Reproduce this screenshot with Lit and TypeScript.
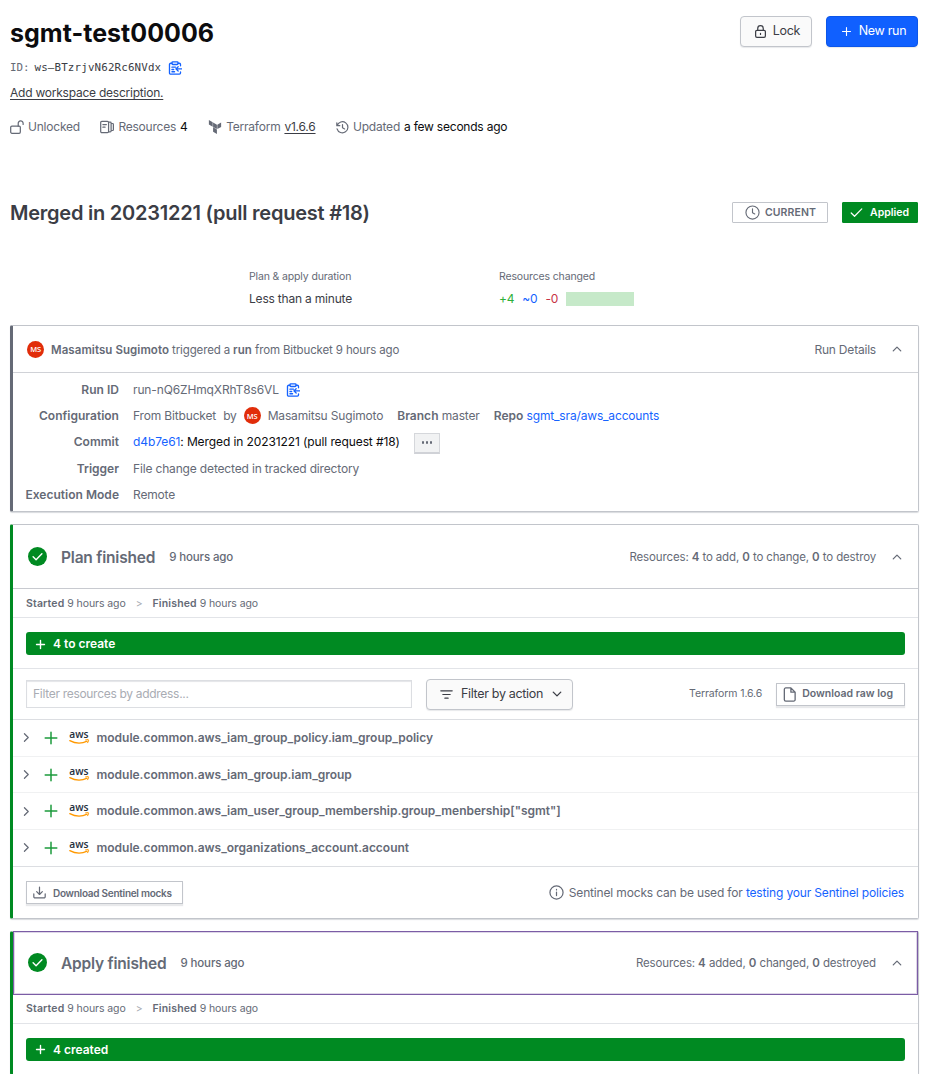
import { LitElement, html, svg, css, nothing, type TemplateResult } from 'lit';
import { customElement, property } from 'lit/decorators.js';

const ICONS: Record<string, TemplateResult> = {
  lock: svg`<rect x="2" y="6.5" width="12" height="8.7" rx="1.6"/><path d="M4.6 6.5V4.2a3.4 3.4 0 0 1 6.8 0v2.3M8 10.3v1.4"/>`,
  unlock: svg`<rect x=".8" y="7" width="11" height="8.2" rx="1.4"/><path d="M9.4 7V4a2.8 2.800 0 0 1 5.600-.3v1.300"/>`,
  plus: svg`<path d="M8 2.2v11.6M2.2 8h11.6"/>`,
  clipboard: svg`<path d="M4.5 2.6H3A1.3 1.3 0 0 0 1.700 3.900v9.900A1.300 1.300 0 0 0 3 15.100h10a1.300 1.300 0 0 0 1.300-1.300v-1.300M11.500 2.600H13a1.300 1.300 0 0 1 1.300 1.300v1.600"/><rect x="4.600" y="1" width="6.800" height="3" rx=".8"/><path d="M4.500 7h4M4.500 9.700h2M4.500 12.300h3M15.700 9H9.300M11.600 6.500 9 9l2.600 2.500"/>`,
  resources: svg`<rect x=".8" y="1.500" width="9" height="13" rx="1.300"/><path d="M3.300 5.200h4M3.300 8.200h2.500M10.500 2.500h1.200a1 1 0 0 1 1 1v9a1 1 0 0 1-1 1h-1.200M13 4h1.300a1 1 0 0 1 1 1v6a1 1 0 0 1-1 1H13"/>`,
  terraform: svg`<path fill="currentColor" stroke="none" d="M1 0v5.050l4.370 2.530V2.520zM15 2.820l-4.370 2.530v5.050L15 7.870zM5.810 2.820v5.050l4.380 2.530V5.350zM5.810 8.420v5.050L10.190 16v-5.050z"/>`,
  history: svg`<path d="M1 2.200v3.600h3.700M1.400 5.500A6.800 6.800 0 1 1 1.300 9.600M8 4.400v4l2.600 1.400"/>`,
  clock: svg`<circle cx="8" cy="8" r="7"/><path d="M8 4v4.300l2.400 1.300"/>`,
  check: svg`<path d="M1.500 8.600 5.600 12.600 14.500 3.600"/>`,
  done: svg`<circle cx="8" cy="8" r="8" fill="currentColor" stroke="none"/><path stroke="#fff" d="m4.300 8.300 2.500 2.400 4.900-5"/>`,
  up: svg`<path d="m3 10.500 5-5 5 5"/>`,
  down: svg`<path d="m3 5.500 5 5 5-5"/>`,
  right: svg`<path d="m5 2.500 5.500 5.500L5 13.500"/>`,
  filter: svg`<path d="M1 3.500h14M3.500 8h9M6 12.500h4"/>`,
  file: svg`<path d="M9.500 1H4a1.500 1.500 0 0 0-1.500 1.500v11A1.500 1.500 0 0 0 4 15h8.500a1.500 1.500 0 0 0 1.500-1.500v-8zM9.500 1v4.500H14"/>`,
  download: svg`<path d="M1 9.800v3.400a1.500 1.500 0 0 0 1.500 1.500h11a1.500 1.500 0 0 0 1.500-1.500V9.800M8 1.500v8.700M4.500 7 8 10.400 11.500 7"/>`,
  info: svg`<circle cx="8" cy="8" r="7"/><path d="M8 7.500v3.800M8 4.700v.5"/>`,
};

const icon = (name: string, size: number, stroke = 1.4) => html`
  <svg class="icon" width=${size} height=${size} viewBox="0 0 16 16" fill="none"
    stroke="currentColor" stroke-width=${stroke} stroke-linecap="round" stroke-linejoin="round">${ICONS[name]}</svg>`;

const RESOURCES = [
  'module.common.aws_iam_group_policy.iam_group_policy',
  'module.common.aws_iam_group.iam_group',
  'module.common.aws_iam_user_group_membership.group_menbership["sgmt"]',
  'module.common.aws_organizations_account.account',
];

const base = css`
  * {
    box-sizing: border-box;
  }
  .icon {
    display: block;
    flex: none;
  }
  b {
    font-weight: 600;
    letter-spacing: 0.02px;
  }
  a {
    color: #1563ff;
    text-decoration: none;
  }
`;

@customElement('run-stage')
export class RunStage extends LitElement {
  static styles = [
    base,
    css`
      :host {
        display: block;
      }
      .card {
        border: 1px solid #c2c5cb;
        border-left: 3px solid #008a22;
        border-radius: 2px;
        box-shadow: 0 1px 1px rgba(101, 106, 118, 0.25);
      }
      .head {
        display: flex;
        align-items: center;
        height: 64px;
        padding: 0 15px;
        border-bottom: 1px solid #c8cad0;
      }
      .head.focused {
        margin-top: -1px;
        border: 1px solid #7b5ca5;
        box-shadow: inset 0 0 0 1px rgba(123, 92, 165, 0.25);
        padding: 0 14px;
      }
      .head .done {
        color: #008a22;
      }
      .name {
        margin-left: 14px;
        padding-top: 2px;
        font-size: 15.5px;
        font-weight: 600;
        letter-spacing: -0.21px;
      }
      .ago {
        margin-left: 14px;
        padding-top: 1px;
        font-size: 11.5px;
        font-weight: 500;
        letter-spacing: -0.13px;
      }
      .summary {
        margin-left: auto;
        margin-right: 15px;
        padding-top: 1px;
        font-size: 11.5px;
        letter-spacing: -0.14px;
      }
      .times {
        display: flex;
        align-items: center;
        height: 29px;
        padding: 1px 13px 0;
        gap: 10px;
        font-size: 10.5px;
        letter-spacing: -0.08px;
        border-bottom: 1px solid #e2e4e8;
      }
      .times b {
        letter-spacing: 0.15px;
      }
      .arrow {
        color: #a5a9b1;
      }
      .banner-wrap {
        padding: 14px 13px 13px;
      }
      .banner {
        display: flex;
        align-items: center;
        gap: 7px;
        height: 23px;
        padding: 1px 0 0 9px;
        border-radius: 3px;
        background: #008a22;
        color: #fff;
        font-size: 12px;
        font-weight: 600;
        letter-spacing: 0;
      }
    `,
  ];

  @property() name = '';
  @property() banner = '';
  @property({ type: Boolean }) focused = false;
  @property({ attribute: false }) summary: TemplateResult | typeof nothing = nothing;

  render() {
    return html`
      <section class="card">
        <div class="head ${this.focused ? 'focused' : ''}">
          <span class="done">${icon('done', 19, 1.2)}</span>
          <span class="name">${this.name}</span>
          <span class="ago">9 hours ago</span>
          <span class="summary">${this.summary}</span>
          ${icon('up', 12, 1.7)}
        </div>
        <div class="times">
          <span><b>Started</b> 9 hours ago</span>
          <span class="arrow">&gt;</span>
          <span><b>Finished</b> 9 hours ago</span>
        </div>
        <div class="banner-wrap">
          <div class="banner">${icon('plus', 11, 2)}<span>${this.banner}</span></div>
        </div>
        <slot></slot>
      </section>
    `;
  }
}

@customElement('app-root')
export class AppRoot extends LitElement {
  static styles = [
    base,
    css`
      :host {
        display: block;
        box-sizing: border-box;
        height: 1074px;
        overflow: hidden;
        padding: 15px 10px 0;
        background: #fff;
        color: #656a76;
        font-family: Inter, sans-serif;
        font-size: 12px;
        line-height: 16px;
        letter-spacing: -0.16px;
      }
      .top,
      .run-head,
      .meta,
      .meta span,
      .actions,
      .value {
        display: flex;
        align-items: center;
      }
      .top {
        justify-content: space-between;
        height: 32px;
      }
      h1,
      h2 {
        margin: 0;
        padding-top: 2px;
        line-height: 34px;
      }
      h1 {
        padding-top: 4px;
        font-size: 25px;
        font-weight: 700;
        color: #0c0c0e;
        letter-spacing: 0.03px;
      }
      h2 {
        font-size: 20px;
        font-weight: 600;
        color: #3b3d45;
        letter-spacing: -0.23px;
      }
      .actions {
        gap: 14px;
        margin-right: 1px;
      }
      .btn {
        display: flex;
        align-items: center;
        justify-content: center;
        gap: 7px;
        height: 31px;
        border: 1px solid #c2c5cb;
        border-radius: 4px;
        background: #fafafa;
        color: #3b3d45;
        font-size: 12.5px;
        letter-spacing: -0.32px;
        box-shadow: 0 1px 1px rgba(101, 106, 118, 0.15);
      }
      .lock {
        width: 72px;
        padding-left: 2px;
        gap: 6px;
      }
      .new-run {
        width: 92px;
        padding-left: 3px;
        border-color: #0c56e9;
        background: #1060ff;
        color: #fff;
      }
      .id {
        display: flex;
        align-items: center;
        gap: 5px;
        height: 16px;
        margin-top: 13px;
        font-family: 'DejaVu Sans Mono', monospace;
        font-size: 10.8px;
        letter-spacing: 0;
      }
      .id code {
        font: inherit;
        color: #3b3d45;
        letter-spacing: 0.17px;
        margin-right: 2px;
      }
      .copy {
        color: #1563ff;
      }
      .describe {
        height: 16px;
        margin-top: 9px;
        color: #3b3d45;
        letter-spacing: -0.23px;
      }
      .describe span,
      .ver {
        text-decoration: underline;
        text-underline-offset: 2px;
      }
      .meta {
        height: 16px;
        margin-top: 18px;
        gap: 20.5px;
        letter-spacing: -0.22px;
      }
      .meta span {
        gap: 4px;
      }
      .meta em {
        font-style: normal;
        color: #0c0c0e;
      }
      .meta .ver {
        color: #3b3d45;
      }
      .run-head {
        justify-content: space-between;
        height: 34px;
        margin-top: 60px;
      }
      .badge {
        display: flex;
        align-items: center;
        height: 21px;
        padding: 1px 11px 0 12px;
        gap: 5px;
        border: 1px solid #c2c5cb;
        border-radius: 1px;
        font-size: 10.5px;
        font-weight: 600;
        letter-spacing: 0.1px;
      }
      .badge.applied {
        width: 76px;
        padding: 1px 8px 0 7px;
        gap: 7px;
        border-color: #008a22;
        background: #008a22;
        color: #fff;
        letter-spacing: 0;
      }
      .stats {
        display: flex;
        height: 56px;
        margin-top: 40px;
        padding-left: 239px;
      }
      .stat {
        width: 250px;
        font-size: 10.5px;
        letter-spacing: -0.14px;
      }
      .stat .value {
        height: 20px;
        margin-top: 4px;
        gap: 8px;
        font-size: 12px;
        color: #3b3d45;
        letter-spacing: -0.2px;
      }
      .stat .add {
        color: #2eb039;
      }
      .stat .chg {
        color: #1563ff;
      }
      .stat .del {
        color: #c73445;
      }
      .bar {
        width: 68px;
        height: 14px;
        background: #c6e9c9;
      }
      .card {
        height: 187px;
        margin-bottom: 12px;
        border: 1px solid #c2c5cb;
        border-left: 3px solid #656a76;
        border-radius: 2px;
        box-shadow: 0 1px 1px rgba(101, 106, 118, 0.25);
      }
      .card-head {
        display: flex;
        align-items: center;
        height: 47px;
        padding: 0 15px 0 14px;
        border-bottom: 1px solid #d0d2d7;
      }
      .card-head .who {
        margin-left: 7px;
        padding-top: 1px;
        font-size: 11.5px;
        letter-spacing: -0.14px;
      }
      .card-head .who b {
        letter-spacing: 0.07px;
      }
      .card-head .toggle {
        margin-left: auto;
        margin-right: 15px;
        padding-top: 1px;
        letter-spacing: -0.2px;
      }
      .avatar {
        display: inline-flex;
        align-items: center;
        justify-content: center;
        width: 17px;
        height: 17px;
        border-radius: 50%;
        background: #e12d0a;
        color: #fff;
        font-family: 'Open Sans', sans-serif;
        font-size: 7.5px;
        font-weight: 600;
      }
      .details {
        display: grid;
        grid-template-columns: 106px 1fr;
        grid-template-rows: 26px 25px 28px 26px 26px;
        column-gap: 14px;
        align-items: center;
        padding-top: 4px;
      }
      .details > b {
        text-align: right;
      }
      .run-id {
        gap: 7px;
        letter-spacing: -0.13px;
      }
      .config {
        gap: 7px;
      }
      .config .pair {
        margin-left: 7px;
      }
      .msg {
        color: #0c0c0e;
        letter-spacing: -0.1px;
      }
      .more {
        width: 26px;
        height: 21px;
        margin: 2px 0 0 14px;
        border: 1px solid #d5d7db;
        border-bottom: 2px solid #d0d2d7;
        background: #f1f2f3;
        display: flex;
        align-items: center;
        justify-content: center;
        gap: 1.5px;
      }
      .more i {
        width: 2.5px;
        height: 2.5px;
        border-radius: 50%;
        background: #656a76;
      }
      .tools {
        display: flex;
        align-items: center;
        height: 52px;
        padding: 0 13px;
        border-top: 1px solid #e2e4e8;
        border-bottom: 1px solid #dcdee2;
      }
      .filter {
        width: 386px;
        height: 28px;
        padding: 0 6px 1px;
        border: 1px solid #dcdee2;
        box-shadow: inset 0 1px 1px #e4e5e8;
        font: inherit;
        letter-spacing: -0.3px;
        outline: none;
      }
      .filter::placeholder {
        color: #a9acb3;
        opacity: 1;
        letter-spacing: -0.3px;
      }
      .by-action {
        width: 147px;
        margin-left: 14px;
        padding-left: 4px;
        gap: 8px;
      }
      .tf {
        margin-left: auto;
        margin-right: 14px;
        font-size: 10.5px;
        letter-spacing: -0.1px;
      }
      .small-btn {
        display: flex;
        align-items: center;
        height: 23px;
        padding: 0 11px 0 5px;
        gap: 5px;
        border: 1px solid #c2c5cb;
        box-shadow: 0 2px 1px rgba(101, 106, 118, 0.15);
        font-size: 10.5px;
        font-weight: 600;
        letter-spacing: 0;
      }
      .small-btn.mocks {
        padding: 0 10px 0 6px;
        gap: 7px;
        font-size: 10px;
        letter-spacing: -0.27px;
      }
      .resource {
        display: flex;
        align-items: center;
        height: 36.7px;
        padding-left: 8px;
        border-bottom: 1px solid #f0f1f2;
        font-size: 12px;
        font-weight: 600;
        letter-spacing: -0.015px;
      }
      .resource:last-of-type {
        border-bottom-color: #dcdee2;
      }
      .resource .add {
        margin: 0 10.5px;
        color: #1c9b3c;
      }
      .aws {
        display: block;
        margin: -6px 6.5px 0 0;
        overflow: visible;
      }
      .foot {
        display: flex;
        align-items: center;
        justify-content: space-between;
        height: 51px;
        padding: 1px 14px 0 13px;
      }
      .note {
        display: flex;
        align-items: center;
        gap: 5px;
      }
      .second {
        display: block;
        margin-top: 12px;
      }
    `,
  ];

  private renderResource(address: string) {
    return html`
      <div class="resource">
        ${icon('right', 11, 1.8)}
        <span class="add">${icon('plus', 16, 1.5)}</span>
        <svg class="aws" width="21" height="22" viewBox="0 -6 21 22">
          <text x=".3" y="8" font-family="Open Sans, sans-serif" font-size="11" font-weight="600" fill="#252f3e" textLength="19.2" lengthAdjust="spacingAndGlyphs">aws</text>
          <path d="M.8 10.600q8.600 4.800 17.400.6" fill="none" stroke="#f90" stroke-width="1.300" stroke-linecap="round" />
          <path d="M16.600 9.900q3.400-.8 3 .4 0 1.300-1 2.500" fill="none" stroke="#f90" stroke-width="1" stroke-linecap="round" />
        </svg>
        <span class="address">${address}</span>
      </div>
    `;
  }

  render() {
    return html`
      <header class="top">
        <h1>sgmt-test00006</h1>
        <div class="actions">
          <div class="btn lock">${icon('lock', 13, 1.5)}<span>Lock</span></div>
          <div class="btn new-run">${icon('plus', 11, 1.6)}<span>New run</span></div>
        </div>
      </header>
      <div class="id"><span>ID:</span><code>ws–BTzrjvN62Rc6NVdx</code><span class="copy">${icon('clipboard', 14, 1.5)}</span></div>
      <div class="describe"><span>Add workspace description.</span></div>
      <div class="meta">
        <span>${icon('unlock', 14)}<span>Unlocked</span></span>
        <span>${icon('resources', 14)}<span>Resources</span><em>4</em></span>
        <span>${icon('terraform', 14)}<span>Terraform</span><em class="ver">v1.6.6</em></span>
        <span>${icon('history', 13, 1.5)}<span>Updated</span><em>a few seconds ago</em></span>
      </div>

      <div class="run-head">
        <h2>Merged in 20231221 (pull request #18)</h2>
        <div class="actions">
          <div class="badge">${icon('clock', 15, 1.2)}<span>CURRENT</span></div>
          <div class="badge applied">${icon('check', 13, 1.5)}<span>Applied</span></div>
        </div>
      </div>

      <div class="stats">
        <div class="stat">
          <div class="label">Plan &amp; apply duration</div>
          <div class="value">Less than a minute</div>
        </div>
        <div class="stat">
          <div class="label">Resources changed</div>
          <div class="value">
            <span class="add">+4</span><span class="chg">~0</span><span class="del">-0</span><span class="bar"></span>
          </div>
        </div>
      </div>

      <section class="card">
        <div class="card-head">
          <span class="avatar">MS</span>
          <span class="who"><b>Masamitsu Sugimoto</b> triggered a <b>run</b> from Bitbucket 9 hours ago</span>
          <span class="toggle">Run Details</span>
          ${icon('up', 12, 1.7)}
        </div>
        <div class="details">
          <b>Run ID</b>
          <div class="value run-id"><span>run-nQ6ZHmqXRhT8s6VL</span><span class="copy">${icon('clipboard', 14, 1.5)}</span></div>
          <b>Configuration</b>
          <div class="value config">
            <span>From Bitbucket</span><span>by</span><span class="avatar">MS</span><span>Masamitsu Sugimoto</span>
            <span class="pair"><b>Branch</b> master</span>
            <span class="pair"><b>Repo</b> <a>sgmt_sra/aws_accounts</a></span>
          </div>
          <b>Commit</b>
          <div class="value">
            <span class="msg"><a>d4b7e61</a>: Merged in 20231221 (pull request #18)</span>
            <span class="more"><i></i><i></i><i></i></span>
          </div>
          <b>Trigger</b>
          <div class="value">File change detected in tracked directory</div>
          <b>Execution Mode</b>
          <div class="value">Remote</div>
        </div>
      </section>

      <run-stage
        name="Plan finished"
        banner="4 to create"
        .summary=${html`Resources: <b>4</b> to add, <b>0</b> to change, <b>0</b> to destroy`}
      >
        <div class="tools">
          <input class="filter" placeholder="Filter resources by address..." />
          <div class="btn by-action">${icon('filter', 13, 1.5)}<span>Filter by action</span>${icon('down', 12, 1.8)}</div>
          <span class="tf">Terraform 1.6.6</span>
          <div class="small-btn">${icon('file', 15, 1.4)}<span>Download raw log</span></div>
        </div>
        <div class="resources">${RESOURCES.map((address) => this.renderResource(address))}</div>
        <div class="foot">
          <div class="small-btn mocks">${icon('download', 13, 1.5)}<span>Download Sentinel mocks</span></div>
          <div class="note">${icon('info', 15, 1.3)}<span>Sentinel mocks can be used for <a>testing your Sentinel policies</a></span></div>
        </div>
      </run-stage>

      <run-stage
        class="second"
        name="Apply finished"
        banner="4 created"
        focused
        .summary=${html`Resources: <b>4</b> added, <b>0</b> changed, <b>0</b> destroyed`}
      ></run-stage>
    `;
  }
}
